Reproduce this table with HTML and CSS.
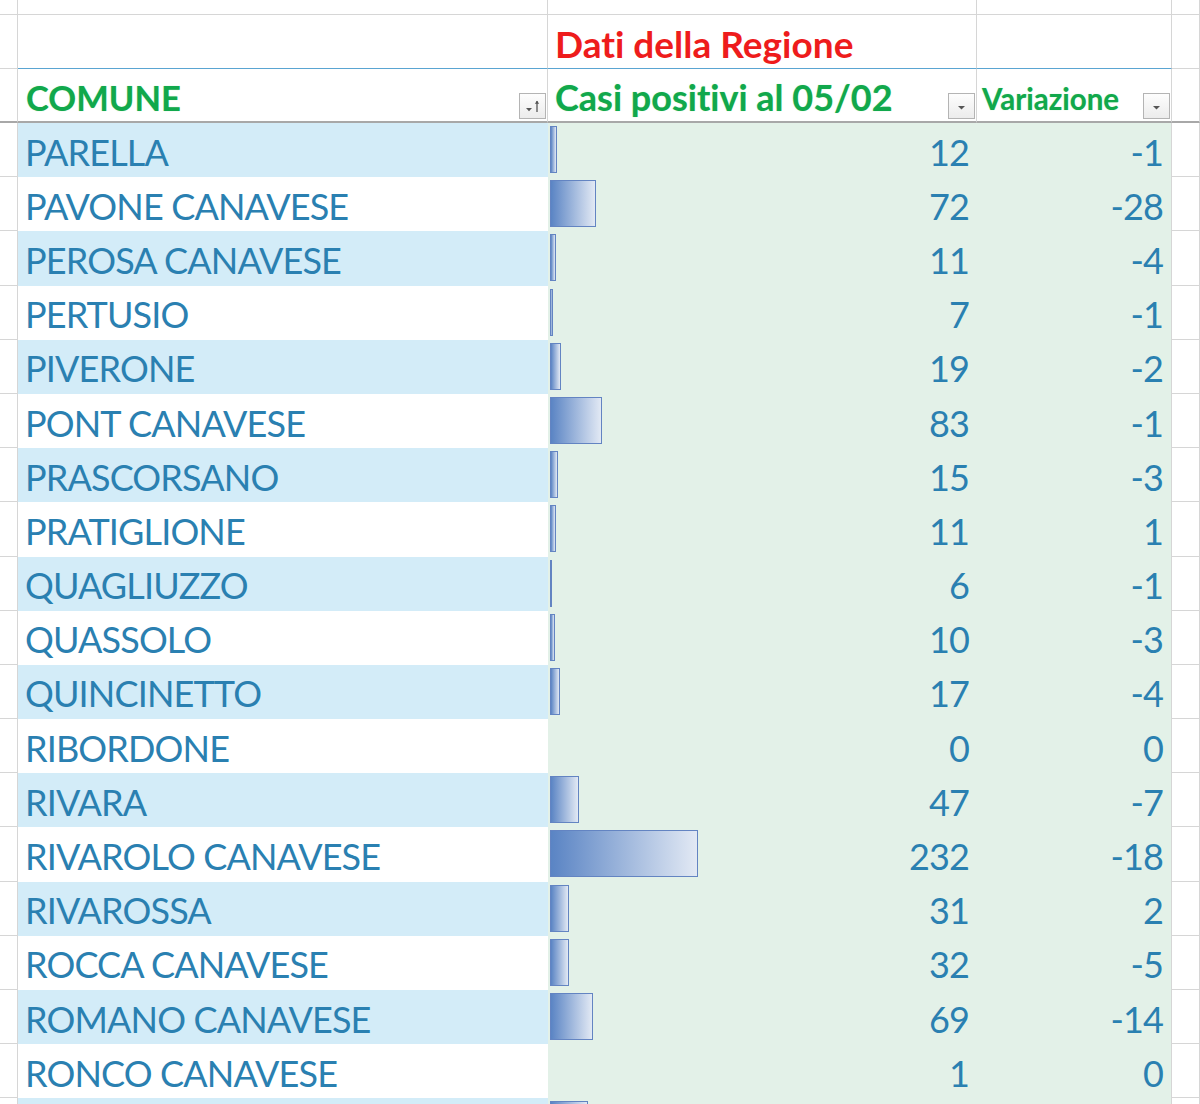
FILE: index.html
```html
<!DOCTYPE html>
<html lang="it">
<head>
<meta charset="utf-8">
<title>Dati della Regione</title>
<link rel="stylesheet" href="styles.css">
</head>
<body>
<div class="sheet">
  <div class="row top">
    <div class="m"></div><div class="a"></div><div class="b"></div><div class="c"></div><div class="x"></div>
  </div>
  <div class="row h1">
    <div class="m"></div>
    <div class="a"></div>
    <div class="b"><span class="region">Dati della Regione</span></div>
    <div class="c"></div>
    <div class="x"></div>
  </div>
  <div class="row h2">
    <div class="m"></div>
    <div class="a"><span class="head big">COMUNE</span>
      <span class="fbtn"><svg width="25" height="24" viewBox="0 0 25 24"><path d="M6 14h6l-3 3.2z" fill="#555"/><path d="M17 7v11" stroke="#555" stroke-width="1.3"/><path d="M14.8 9.7l2.2-3 2.2 3z" fill="#555"/></svg></span>
    </div>
    <div class="b"><span class="head big">Casi positivi al 05/02</span>
      <span class="fbtn"><svg width="25" height="24" viewBox="0 0 25 24"><path d="M9 12h7l-3.5 3.6z" fill="#555"/></svg></span>
    </div>
    <div class="c"><span class="head small">Variazione</span>
      <span class="fbtn"><svg width="25" height="24" viewBox="0 0 25 24"><path d="M9 12h7l-3.5 3.6z" fill="#555"/></svg></span>
    </div>
    <div class="x"></div>
  </div>

  <div class="row data odd"><div class="m"></div><div class="a">PARELLA</div><div class="b"><span class="bar" style="width:7px"></span><span class="num">12</span></div><div class="c"><span class="num">-1</span></div><div class="x"></div></div>
  <div class="row data"><div class="m"></div><div class="a">PAVONE CANAVESE</div><div class="b"><span class="bar" style="width:46px"></span><span class="num">72</span></div><div class="c"><span class="num">-28</span></div><div class="x"></div></div>
  <div class="row data odd"><div class="m"></div><div class="a">PEROSA CANAVESE</div><div class="b"><span class="bar" style="width:6px"></span><span class="num">11</span></div><div class="c"><span class="num">-4</span></div><div class="x"></div></div>
  <div class="row data"><div class="m"></div><div class="a">PERTUSIO</div><div class="b"><span class="bar" style="width:3px"></span><span class="num">7</span></div><div class="c"><span class="num">-1</span></div><div class="x"></div></div>
  <div class="row data odd"><div class="m"></div><div class="a">PIVERONE</div><div class="b"><span class="bar" style="width:11px"></span><span class="num">19</span></div><div class="c"><span class="num">-2</span></div><div class="x"></div></div>
  <div class="row data"><div class="m"></div><div class="a">PONT CANAVESE</div><div class="b"><span class="bar" style="width:52px"></span><span class="num">83</span></div><div class="c"><span class="num">-1</span></div><div class="x"></div></div>
  <div class="row data odd"><div class="m"></div><div class="a">PRASCORSANO</div><div class="b"><span class="bar" style="width:8px"></span><span class="num">15</span></div><div class="c"><span class="num">-3</span></div><div class="x"></div></div>
  <div class="row data"><div class="m"></div><div class="a">PRATIGLIONE</div><div class="b"><span class="bar" style="width:6px"></span><span class="num">11</span></div><div class="c"><span class="num">1</span></div><div class="x"></div></div>
  <div class="row data odd"><div class="m"></div><div class="a">QUAGLIUZZO</div><div class="b"><span class="bar" style="width:2px"></span><span class="num">6</span></div><div class="c"><span class="num">-1</span></div><div class="x"></div></div>
  <div class="row data"><div class="m"></div><div class="a">QUASSOLO</div><div class="b"><span class="bar" style="width:5px"></span><span class="num">10</span></div><div class="c"><span class="num">-3</span></div><div class="x"></div></div>
  <div class="row data odd"><div class="m"></div><div class="a">QUINCINETTO</div><div class="b"><span class="bar" style="width:10px"></span><span class="num">17</span></div><div class="c"><span class="num">-4</span></div><div class="x"></div></div>
  <div class="row data"><div class="m"></div><div class="a">RIBORDONE</div><div class="b"><span class="num">0</span></div><div class="c"><span class="num">0</span></div><div class="x"></div></div>
  <div class="row data odd"><div class="m"></div><div class="a">RIVARA</div><div class="b"><span class="bar" style="width:29px"></span><span class="num">47</span></div><div class="c"><span class="num">-7</span></div><div class="x"></div></div>
  <div class="row data"><div class="m"></div><div class="a">RIVAROLO CANAVESE</div><div class="b"><span class="bar" style="width:148px"></span><span class="num">232</span></div><div class="c"><span class="num">-18</span></div><div class="x"></div></div>
  <div class="row data odd"><div class="m"></div><div class="a">RIVAROSSA</div><div class="b"><span class="bar" style="width:19px"></span><span class="num">31</span></div><div class="c"><span class="num">2</span></div><div class="x"></div></div>
  <div class="row data"><div class="m"></div><div class="a">ROCCA CANAVESE</div><div class="b"><span class="bar" style="width:19px"></span><span class="num">32</span></div><div class="c"><span class="num">-5</span></div><div class="x"></div></div>
  <div class="row data odd"><div class="m"></div><div class="a">ROMANO CANAVESE</div><div class="b"><span class="bar" style="width:43px"></span><span class="num">69</span></div><div class="c"><span class="num">-14</span></div><div class="x"></div></div>
  <div class="row data"><div class="m"></div><div class="a">RONCO CANAVESE</div><div class="b"><span class="num">1</span></div><div class="c"><span class="num">0</span></div><div class="x"></div></div>
  <div class="row data odd"><div class="m"></div><div class="a"></div><div class="b"><span class="bar" style="width:38px"></span></div><div class="c"></div><div class="x"></div></div>
</div>
</body>
</html>
```

FILE: styles.css
```css
html, body {
  margin: 0;
  padding: 0;
  background: #ffffff;
}

body {
  width: 1200px;
  height: 1104px;
  overflow: hidden;
  font-family: Lato, "Open Sans", "Liberation Sans", sans-serif;
  font-variant-ligatures: none;
}

.sheet {
  display: flex;
  flex-direction: column;
}

.row {
  display: grid;
  grid-template-columns: 18px 530px 429px 195px 28px;
}

.row > div {
  box-sizing: border-box;
  position: relative;
  display: flex;
  align-items: center;
  border-right: 1px solid #d6d6d6;
  border-bottom: 1px solid #d6d6d6;
  white-space: nowrap;
}

.top {
  height: 15px;
}

.h1 {
  height: 54px;
}

.h1 .a,
.h1 .b,
.h1 .c {
  border-bottom-color: #5aa5d2;
}

.h2 {
  height: 54px;
}

.h2 > div {
  border-bottom: 2px solid #a8a8a8;
}

.region {
  color: #ee1c1c;
  font-weight: 700;
  font-size: 37px;
  letter-spacing: 0;
  padding-left: 7px;
  padding-top: 3px;
}

.head {
  color: #11a84c;
  font-weight: 700;
  text-shadow: 0 0 1px rgba(120, 220, 140, 0.7);
  padding-top: 4px;
}

.head.big {
  font-size: 34.5px;
  padding-left: 8px;
}

.b .head.big {
  font-size: 36px;
  letter-spacing: 0;
  padding-left: 7px;
}

.head.small {
  font-size: 29.5px;
  padding-left: 5px;
  padding-top: 6px;
}

.fbtn {
  position: absolute;
  right: 1px;
  bottom: 2px;
  width: 25px;
  height: 24px;
  border: 1px solid #b4b4b4;
  background: linear-gradient(#fdfdfd, #ececec);
}

.fbtn svg {
  display: block;
}

.data {
  height: 54.2px;
}

.data > .a,
.data > .b,
.data > .c {
  border: none;
  font-size: 36px;
  letter-spacing: -0.85px;
  color: #2a80b1;
  padding-top: 3px;
}

.data > .a {
  padding-left: 7px;
  background: #ffffff;
}

.data.odd > .a {
  background: #d3ecf8;
}

.data > .b,
.data > .c {
  background: #e3f1e8;
  justify-content: flex-end;
  padding-right: 8px;
}

.data > .c {
  width: 195px;
  border-right: 1px solid #d6d6d6;
}

.data > .b {
  width: 429px;
}

.num {
  position: relative;
}

.bar {
  position: absolute;
  left: 2px;
  top: 3px;
  height: 47px;
  box-sizing: border-box;
  border: 1px solid #6384c2;
  background: linear-gradient(to right, #5a84c4, #e2e9f4);
}
```
